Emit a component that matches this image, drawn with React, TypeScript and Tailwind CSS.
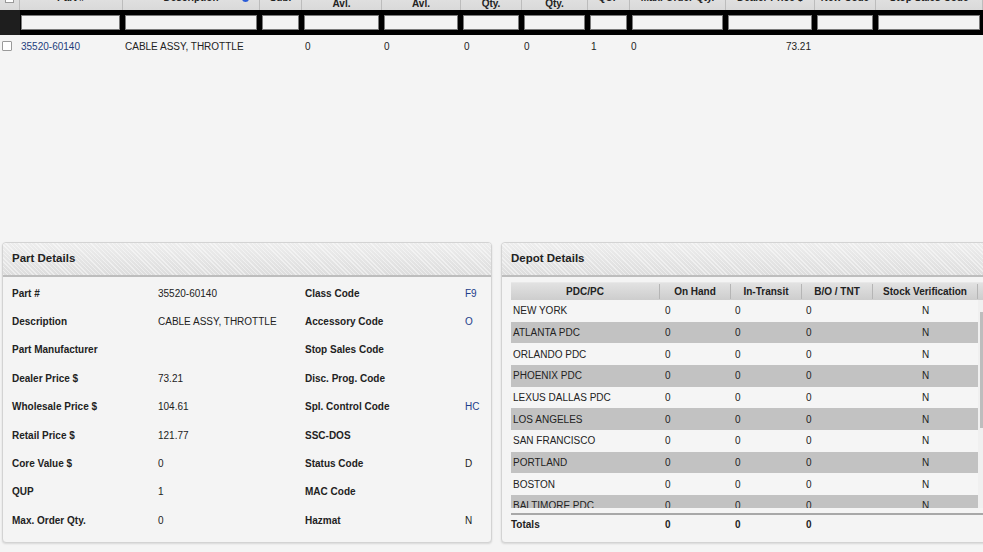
import React from "react";

const GRID =
  "grid grid-cols-[20px_103px_137px_42px_80px_79px_61px_66px_42px_96px_89px_61px_107px]";

const HEADERS = [
  "",
  "Part #",
  "Description",
  "Sub.",
  "Dealer\nAvl.",
  "PDC\nAvl.",
  "B/O\nQty.",
  "On Hand\nQty.",
  "QUP",
  "Max. Order Qty.",
  "Dealer Price $",
  "New Code",
  "Stop Sales Code",
];

const LEFT_DETAILS: [string, string][] = [
  ["Part #", "35520-60140"],
  ["Description", "CABLE ASSY, THROTTLE"],
  ["Part Manufacturer", ""],
  ["Dealer Price $", "73.21"],
  ["Wholesale Price $", "104.61"],
  ["Retail Price $", "121.77"],
  ["Core Value $", "0"],
  ["QUP", "1"],
  ["Max. Order Qty.", "0"],
];

const RIGHT_DETAILS: [string, string, boolean][] = [
  ["Class Code", "F9", true],
  ["Accessory Code", "O", true],
  ["Stop Sales Code", "", false],
  ["Disc. Prog. Code", "", false],
  ["Spl. Control Code", "HC", true],
  ["SSC-DOS", "", false],
  ["Status Code", "D", false],
  ["MAC Code", "", false],
  ["Hazmat", "N", false],
];

const DEPOTS = [
  "NEW YORK",
  "ATLANTA PDC",
  "ORLANDO PDC",
  "PHOENIX PDC",
  "LEXUS DALLAS PDC",
  "LOS ANGELES",
  "SAN FRANCISCO",
  "PORTLAND",
  "BOSTON",
  "BALTIMORE PDC",
];

const DEPOT_GRID = "grid grid-cols-[149px_71px_71px_71px_105px]";

function PanelHeader({ title }: { title: string }) {
  return (
    <div className="flex h-[34px] items-center border-b-2 border-[#bdbdbd] bg-[image:repeating-linear-gradient(45deg,rgba(255,255,255,0.45)_0px,rgba(255,255,255,0.45)_1px,transparent_1px,transparent_3px),linear-gradient(#ededed,#dddddd)] pb-[1px] pl-[9px] text-[11.5px] font-bold text-[#222]">
      {title}
    </div>
  );
}

function PartsTable() {
  return (
    <div className="flex h-[236px] flex-col text-[10px] text-[#222]">
      {/* header row, scrolled mostly out of view */}
      <div className={`${GRID} -mt-[20px] h-[30px] shrink-0 bg-gradient-to-b from-[#ececec] to-[#d9d9d9]`}>
        {HEADERS.map((h, i) => (
          <div
            key={i}
            className="relative flex items-center justify-center whitespace-pre-line border-r border-[#bcbcbc] pt-[5px] text-center font-bold leading-[12px]"
          >
            {i === 0 ? (
              <div className="h-[10px] w-[9px] border border-[#999] bg-white" />
            ) : (
              h
            )}
            {i === 2 && (
              <span className="absolute right-[10px] top-[15px] h-[7px] w-[7px] rounded-full bg-[#2a5bd7]" />
            )}
          </div>
        ))}
      </div>

      {/* filter row */}
      <div className={`${GRID} h-[25px] shrink-0 items-center bg-black`}>
        <div className="h-full bg-[#1e1e1e]" />
        {HEADERS.slice(1).map((_, i) => (
          <div key={i} className={i === 0 ? "pl-[1px] pr-[3px]" : "pl-[2px] pr-[3px]"}>
            <div className="h-[15px] w-full border border-[#7a7a7a] bg-[#f3f3f3]" />
          </div>
        ))}
      </div>

      {/* data row */}
      <div className={`${GRID} h-[22px] shrink-0 items-center`}>
        <div className="pl-[2px]">
          <div className="h-[10px] w-[10px] rounded-[1px] border border-[#9a9a9a] bg-white" />
        </div>
        <div className="pl-[1px] text-[#1d3d7c]">35520-60140</div>
        <div className="pl-[2px]">CABLE ASSY, THROTTLE</div>
        <div />
        <div className="pl-[3px]">0</div>
        <div className="pl-[2px]">0</div>
        <div className="pl-[3px]">0</div>
        <div className="pl-[2px]">0</div>
        <div className="pl-[3px]">1</div>
        <div className="pl-[1px]">0</div>
        <div className="pr-[4px] text-right">73.21</div>
        <div />
        <div />
      </div>
    </div>
  );
}

function PartDetails() {
  return (
    <div className="w-[490px] shrink-0 overflow-hidden rounded-[4px] border border-[#d3d3d3] bg-[#f4f4f4] shadow-[0_1px_2px_rgba(0,0,0,0.12)]">
      <PanelHeader title="Part Details" />
      <div className="pb-[7px] pt-[2px] pl-[9px] text-[10px] text-[#222]">
        {LEFT_DETAILS.map(([label, value], i) => {
          const [rLabel, rValue, blue] = RIGHT_DETAILS[i];
          return (
            <div
              key={label}
              className="grid h-[28.4px] grid-cols-[146px_147px_160px_1fr] items-center"
            >
              <div className="font-bold">{label}</div>
              <div>{value}</div>
              <div className="font-bold">{rLabel}</div>
              <div className={blue ? "text-[#1d3d8a]" : ""}>{rValue}</div>
            </div>
          );
        })}
      </div>
    </div>
  );
}

function DepotDetails() {
  return (
    <div className="w-[490px] shrink-0 overflow-hidden rounded-[4px] border border-[#d3d3d3] bg-[#f4f4f4] shadow-[0_1px_2px_rgba(0,0,0,0.12)]">
      <PanelHeader title="Depot Details" />
      <div className="pl-[9px] pt-[5px] text-[10px] text-[#222]">
        <div
          className={`${DEPOT_GRID} h-[18px] items-center border-t border-[#e8e8e8] bg-gradient-to-b from-[#e2e2e2] to-[#cdcdcd] text-center font-bold`}
        >
          <div className="border-r border-[#b5b5b5]">PDC/PC</div>
          <div className="border-r border-[#b5b5b5]">On Hand</div>
          <div className="border-r border-[#b5b5b5]">In-Transit</div>
          <div className="border-r border-[#b5b5b5]">B/O / TNT</div>
          <div className="border-r border-[#b5b5b5]">Stock Verification</div>
        </div>
        <div className="flex h-[208px] overflow-hidden">
          <div className="w-[467px]">
            {DEPOTS.map((name, i) => (
              <div
                key={name}
                className={`${DEPOT_GRID} h-[21.67px] items-center ${
                  i % 2 === 1 ? "bg-[#c2c2c2]" : "bg-[#f5f5f5]"
                }`}
              >
                <div className="pl-[2px]">{name}</div>
                <div className="pl-[5px]">0</div>
                <div className="pl-[4px]">0</div>
                <div className="pl-[4px]">0</div>
                <div className="text-center">N</div>
              </div>
            ))}
          </div>
          <div className="flex w-[10px] flex-col bg-[#f0f0f0] pt-[12px]">
            <div className="ml-[2px] h-[116px] w-[6px] bg-[#bdbdbd]" />
          </div>
        </div>
        <div className="mt-[5px] h-[2px] bg-[#a8a8a8]" />
        <div className={`${DEPOT_GRID} h-[19px] items-center font-bold`}>
          <div>Totals</div>
          <div className="pl-[5px]">0</div>
          <div className="pl-[4px]">0</div>
          <div className="pl-[4px]">0</div>
          <div />
        </div>
        <div className="h-[7px]" />
      </div>
    </div>
  );
}

export default function App() {
  return (
    <div className="h-[552px] w-[983px] overflow-hidden bg-[#f4f4f4] font-['Liberation_Sans',Arial,sans-serif]">
      <PartsTable />
      <div className="flex gap-[9px] pl-[2px] pt-[6px]">
        <PartDetails />
        <DepotDetails />
      </div>
    </div>
  );
}
